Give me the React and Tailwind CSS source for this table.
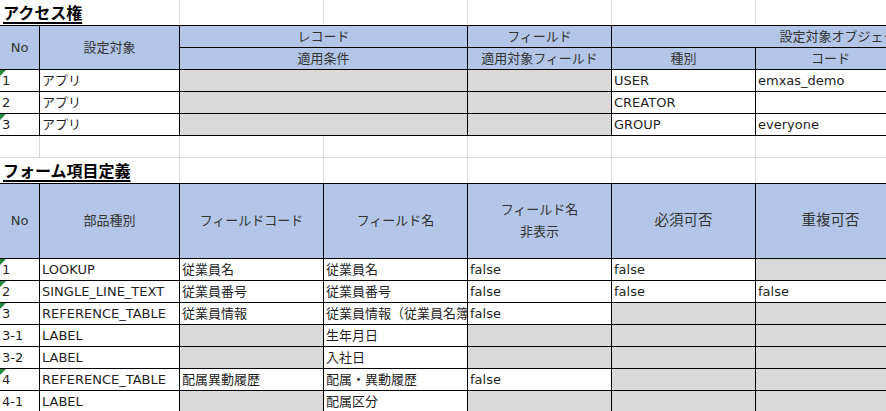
// Excel-like sheet: アクセス権 and フォーム項目定義 tables.

const COLS = "grid grid-cols-[40px_140px_144px_144px_144px_144px_150px_172px]";

function Tri() {
  return (
    <span className="absolute left-0 top-0 h-0 w-0 border-t-[6px] border-r-[6px] border-t-[#1f8a3b] border-r-transparent" />
  );
}

function Cell({ children, gray, tri, className = "" }) {
  return (
    <div
      className={`relative overflow-hidden whitespace-nowrap border-r border-b border-black pl-[2px] leading-[21px] text-[#1f1f1f] ${
        gray ? "bg-[#d9d9d9]" : "bg-white"
      } ${className}`}
    >
      {tri && <Tri />}
      {children}
    </div>
  );
}

function Head({ children, className = "" }) {
  return (
    <div
      className={`flex items-center justify-center overflow-hidden whitespace-nowrap border-r border-b border-black bg-[#b4c6e7] text-center text-[#333] ${className}`}
    >
      {children}
    </div>
  );
}

function GridRow({ title, bottom = false, height = "h-[25px]" }) {
  const line = `border-r border-[#dadada] ${bottom ? "border-b" : ""}`;
  return (
    <div className={`${COLS} ${height}`}>
      {title ? (
        <div className={`col-span-2 ${line} pl-[3px] pt-[2px] font-['Noto_Sans_CJK_JP',sans-serif] text-[16px] font-bold leading-[21px] text-black underline decoration-[1.5px] underline-offset-[3px]`}>
          {title}
        </div>
      ) : (
        <>
          <div className={line} />
          <div className={line} />
        </>
      )}
      <div className={line} />
      <div className={line} />
      <div className={line} />
      <div className={line} />
      <div className={line} />
      <div className={line} />
    </div>
  );
}

const access = [
  { no: "1", tri: true, target: "アプリ", kind: "USER", code: "emxas_demo" },
  { no: "2", tri: false, target: "アプリ", kind: "CREATOR", code: "" },
  { no: "3", tri: true, target: "アプリ", kind: "GROUP", code: "everyone" },
];

// null = greyed out cell
const fields = [
  ["1", true, "LOOKUP", "従業員名", "従業員名", "false", "false", null],
  ["2", true, "SINGLE_LINE_TEXT", "従業員番号", "従業員番号", "false", "false", "false"],
  ["3", true, "REFERENCE_TABLE", "従業員情報", "従業員情報（従業員名簿）", "false", null, null],
  ["3-1", false, "LABEL", null, "生年月日", null, null, null],
  ["3-2", false, "LABEL", null, "入社日", null, null, null],
  ["4", true, "REFERENCE_TABLE", "配属異動履歴", "配属・異動履歴", "false", null, null],
  ["4-1", false, "LABEL", null, "配属区分", null, null, null],
];

export default function App() {
  return (
    <div className="h-[411px] w-[886px] overflow-hidden bg-white font-['DejaVu_Sans','Noto_Sans_CJK_JP',sans-serif] text-[13px]">
      <div className="w-[1078px]">
        <GridRow title="アクセス権" />

        <div className={`${COLS} grid-rows-[22px_22px_22px_22px_22px] border-t border-black`}>
          <Head className="row-span-2">No</Head>
          <Head className="row-span-2">設定対象</Head>
          <Head className="col-span-2">レコード</Head>
          <Head>フィールド</Head>
          <Head className="col-span-3 justify-center">設定対象オブジェクト</Head>
          <Head className="col-span-2">適用条件</Head>
          <Head>適用対象フィールド</Head>
          <Head>種別</Head>
          <Head>コード</Head>
          <Head />
          {access.map((r) => (
            <div key={r.no} className="contents">
              <Cell tri={r.tri}>{r.no}</Cell>
              <Cell>{r.target}</Cell>
              <Cell gray className="col-span-2" />
              <Cell gray />
              <Cell>{r.kind}</Cell>
              <Cell>{r.code}</Cell>
              <Cell />
            </div>
          ))}
        </div>

        <GridRow bottom height="h-[22px]" />
        <GridRow title="フォーム項目定義" />

        <div className={`${COLS} grid-rows-[75px_repeat(7,22px)] border-t border-black`}>
          <Head>No</Head>
          <Head>部品種別</Head>
          <Head>フィールドコード</Head>
          <Head>フィールド名</Head>
          <Head className="flex-col leading-[22px]">
            <span>フィールド名</span>
            <span>非表示</span>
          </Head>
          <Head className="text-[14.5px]">必須可否</Head>
          <Head className="text-[14.5px]">重複可否</Head>
          <Head />
          {fields.map((r) => (
            <div key={r[0]} className="contents">
              <Cell tri={r[1]}>{r[0]}</Cell>
              <Cell>{r[2]}</Cell>
              {r.slice(3).map((v, i) => (
                <Cell key={i} gray={v === null}>
                  {v}
                </Cell>
              ))}
              <Cell />
            </div>
          ))}
        </div>
      </div>
    </div>
  );
}
